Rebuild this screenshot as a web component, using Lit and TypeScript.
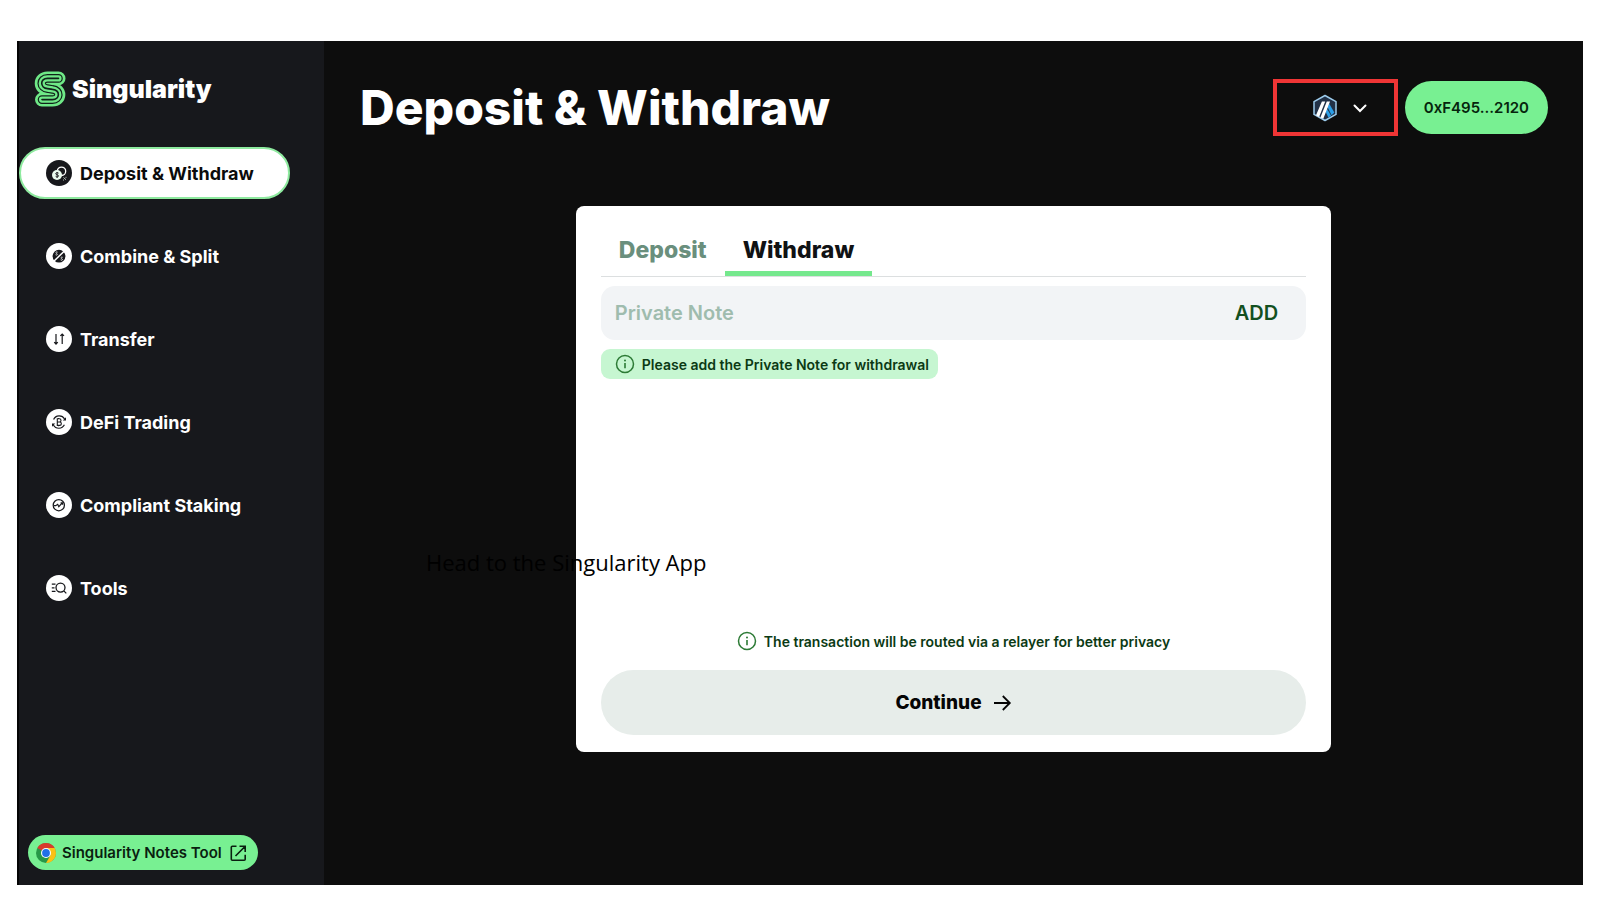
import { LitElement, html, css, svg } from "lit";
import { customElement, property, state } from "lit/decorators.js";
import { classMap } from "lit/directives/class-map.js";

const navIcons: Record<string, unknown> = {
  deposit: svg`
    <circle cx="13" cy="13" r="13" fill="#17181c"/>
    <circle cx="15.500" cy="11.300" r="4.200" fill="none" stroke="#fff" stroke-width="1.300"/>
    <circle cx="11" cy="15" r="5" fill="#e9fbee"/>
    <path d="M12.600 13.200c-.5-.7-2.900-.8-2.900.5 0 1.400 2.900.8 2.900 2.200 0 1.300-2.500 1.200-3 .4M11.100 12v6" fill="none" stroke="#17181c" stroke-width=".9"/>
    <path d="M17.500 17.500l2.500 2.200M20 16.800v1M17 20h1" fill="none" stroke="#cfd8d2" stroke-width=".9"/>`,
  combine: svg`
    <circle cx="13" cy="13" r="13" fill="#fff"/>
    <circle cx="13" cy="13.200" r="6.400" fill="#17181c"/>
    <path d="M6.800 19.200L19.200 7.200" stroke="#fff" stroke-width="1.500"/>
    <path d="M11.600 9.200c-.7-.6-2-.2-1.700.7.200.7 1.500.6 1.400 1.500-.1.800-1.300.9-1.800.3M16.700 14.400c-.7-.6-2-.2-1.700.7.200.7 1.500.6 1.400 1.500-.1.800-1.300.9-1.800.3" fill="none" stroke="#fff" stroke-width=".8"/>`,
  transfer: svg`
    <circle cx="13" cy="13" r="13" fill="#fff"/>
    <path d="M10 8v9.500M8.200 16.200l1.800 1.900 1.800-1.900M16.200 18V8.500M14.400 9.900L16.200 8l1.800 1.900" fill="none" stroke="#17181c" stroke-width="1.200"/>`,
  defi: svg`
    <circle cx="13" cy="13" r="13" fill="#fff"/>
    <path d="M7.600 10.500A6.200 6.200 0 0 1 18.600 10M18.400 15.800A6.200 6.200 0 0 1 7.400 16" fill="none" stroke="#17181c" stroke-width="1.200"/>
    <path d="M20 8.200v3.200h-3.200zM6 17.800v-3.200h3.200z" fill="#17181c"/>
    <path d="M11.300 9.800h2.200c2 0 2 3.200 0 3.200h-2.200zM11.300 13h2.400c2.200 0 2.200 3.400 0 3.400h-2.400zM12.600 8.900v.9M12.600 16.400v.9" fill="none" stroke="#17181c" stroke-width="1.100"/>`,
  staking: svg`
    <circle cx="13" cy="13" r="13" fill="#fff"/>
    <circle cx="12.800" cy="13.200" r="5.600" fill="none" stroke="#17181c" stroke-width="1.300"/>
    <path d="M8 13.700h1.700l2-1.400 1.100 2.400 3.500-3.900M14.600 10.800h1.900v1.900" fill="none" stroke="#17181c" stroke-width="1.200"/>`,
  tools: svg`
    <circle cx="13" cy="13" r="13" fill="#fff"/>
    <path d="M5.800 9.200h3.700M5.800 12.800h2.700M5.800 16.400h3.700M17.800 15.900l2.500 2.500" fill="none" stroke="#17181c" stroke-width="1.300"/>
    <circle cx="14.500" cy="12.600" r="4.500" fill="none" stroke="#17181c" stroke-width="1.300"/>`,
};

const logoCurve =
  "M24.500 7.400H13.500C5.600 7.400 6 17.200 13.500 17.600L18.500 18.400C26.600 19.200 26 28.600 18.500 28.600H8";

const infoIcon = html`<svg class="info" viewBox="0 0 20 20" aria-hidden="true">
  <circle cx="10" cy="10" r="8.500" fill="none" stroke="#2c7a35" stroke-width="1.500"/>
  <path d="M10 9v5.200" stroke="#2c7a35" stroke-width="1.600"/>
  <circle cx="10" cy="6.500" r="1" fill="#2c7a35"/>
</svg>`;

@customElement("side-bar")
class SideBar extends LitElement {
  @property() current = "deposit";

  private items = [
    { id: "deposit", label: "Deposit & Withdraw" },
    { id: "combine", label: "Combine & Split" },
    { id: "transfer", label: "Transfer" },
    { id: "defi", label: "DeFi Trading" },
    { id: "staking", label: "Compliant Staking" },
    { id: "tools", label: "Tools" },
  ];

  static styles = css`
    :host {
      display: flex;
      flex-direction: column;
      box-sizing: border-box;
      padding: 29px 0 15px;
      background: #17181c;
    }
    a {
      color: inherit;
      text-decoration: none;
    }
    .brand {
      display: flex;
      align-items: center;
      gap: 6px;
      padding-left: 15px;
      height: 38px;
      color: #fff;
      font-size: 25px;
      font-weight: 900;
    }
    .brand svg {
      width: 32px;
      height: 36px;
    }
    nav {
      display: flex;
      flex-direction: column;
      align-items: flex-start;
      gap: 31px;
      margin-top: 39px;
    }
    .item {
      display: flex;
      align-items: center;
      gap: 8px;
      box-sizing: border-box;
      width: 271px;
      height: 52px;
      padding-left: 25px;
      border: 2px solid transparent;
      border-radius: 26px;
      color: #fff;
      font-size: 18px;
      font-weight: 700;
    }
    .item svg {
      width: 26px;
      height: 26px;
    }
    .item.active {
      background: #fff;
      border-color: #8eea9f;
      color: #0b0b0b;
    }
    .notes {
      display: flex;
      align-items: center;
      align-self: flex-start;
      gap: 6px;
      height: 35px;
      margin: auto 0 0 9px;
      padding: 0 10px 0 8px;
      border-radius: 18px;
      background: #78f092;
      color: #0a1f10;
      font-size: 15px;
      font-weight: 600;
    }
    .notes svg {
      width: 20px;
      height: 20px;
    }
  `;

  render() {
    return html`
      <a class="brand" href="#home">
        <svg viewBox="0 0 32 36" fill="none" stroke-linecap="round" aria-hidden="true">
          <path d=${logoCurve} stroke="#6fe887" stroke-width="14"/>
          <path d=${logoCurve} stroke="#10221a" stroke-width="8.600"/>
          <path d=${logoCurve} stroke="#6fe887" stroke-width="6.200"/>
          <path d=${logoCurve} stroke="#10221a" stroke-width="1.600"/>
        </svg>
        <span>Singularity</span>
      </a>
      <nav>
        ${this.items.map(
          (i) => html`<a
            href="#${i.id}"
            class=${classMap({ item: true, active: i.id === this.current })}
            ><svg viewBox="0 0 26 26" aria-hidden="true">${navIcons[i.id]}</svg
            ><span>${i.label}</span></a
          >`
        )}
      </nav>
      <a class="notes" href="#notes-tool">
        <svg viewBox="0 0 20 20" aria-hidden="true">
          <circle cx="10" cy="10" r="10" fill="#279847"/>
          <path d="M10 10L1.340 5A10 10 0 0 1 18.660 5z" fill="#d93a2c"/>
          <path d="M10 5h8.660A10 10 0 0 1 10 20l4.330-7.500z" fill="#fbc116"/>
          <circle cx="10" cy="10" r="5" fill="#fff"/>
          <circle cx="10" cy="10" r="3.900" fill="#2170e8"/>
        </svg>
        <span>Singularity Notes Tool</span>
        <svg viewBox="0 0 20 20" fill="none" stroke="#0a1f10" stroke-width="1.600" aria-hidden="true">
          <path d="M8.500 3.300H4.300a1 1 0 0 0-1 1v11.900a1 1 0 0 0 1 1h11.900a1 1 0 0 0 1-1v-4.400M11.500 3.300h5.700V9M17 3.500L7.500 13"/>
        </svg>
      </a>
    `;
  }
}

@customElement("network-select")
class NetworkSelect extends LitElement {
  static styles = css`
    :host {
      display: grid;
      box-sizing: border-box;
      width: 125px;
      height: 57px;
      border: 4px solid #ef3535;
    }
    .face,
    select {
      grid-area: 1 / 1;
    }
    .face {
      display: flex;
      align-items: center;
      gap: 14px;
      padding-left: 35px;
    }
    .chain {
      width: 26px;
      height: 28px;
    }
    .chevron {
      width: 16px;
      height: 16px;
    }
    select {
      appearance: none;
      border: 0;
      background: transparent;
      cursor: pointer;
    }
  `;

  render() {
    return html`
      <span class="face">
        <svg class="chain" viewBox="0 0 26 28" aria-hidden="true">
          <path d="M13 1.500L24 7.600v12.800L13 26.500 2 20.400V7.600z" fill="#213147" stroke="#9dcced" stroke-width="1.500" stroke-linejoin="round"/>
          <path d="M15.600 13.200l1.500-3.700 5.200 9-2.700 2.800z" fill="#2b9fe8"/>
          <path d="M13.600 17.800l1.300-3.400 4.200 7.400-2.700 1.700z" fill="#2b9fe8"/>
          <path d="M9.900 7.500h3.300L7.100 23 4 21.300zM14.800 7.500H18l-6.700 17.300-2.900-1.400z" fill="#fff"/>
        </svg>
        <svg class="chevron" viewBox="0 0 16 16" fill="none" stroke="#fff" stroke-width="2" stroke-linecap="round" aria-hidden="true">
          <path d="M2.500 5.500L8 11l5.500-5.500"/>
        </svg>
      </span>
      <select aria-label="Network"><option value="arbitrum"></option></select>
    `;
  }
}

@customElement("transfer-card")
class TransferCard extends LitElement {
  @state() private tab = "withdraw";

  static styles = css`
    :host {
      display: flex;
      flex-direction: column;
      box-sizing: border-box;
      min-height: 546px;
      padding: 22px 25px 17px;
      border-radius: 8px;
      background: #fff;
    }
    button,
    input {
      font: inherit;
      border: 0;
      margin: 0;
      background: none;
    }
    .tabs {
      display: flex;
      border-bottom: 1px solid #dcdfe0;
    }
    .tab {
      height: 48px;
      padding: 0 18px;
      border-bottom: 5px solid transparent;
      color: #6a8f7d;
      font-size: 23px;
      font-weight: 800;
    }
    .tab.selected {
      border-color: #75e88d;
      color: #101214;
    }
    .field {
      display: flex;
      align-items: center;
      height: 54px;
      margin-top: 9px;
      padding: 0 28px 0 14px;
      border-radius: 14px;
      background: #f2f4f6;
      font-size: 20px;
      font-weight: 600;
    }
    .field input {
      flex: 1;
      min-width: 0;
      padding: 0;
      outline: none;
    }
    .field input::placeholder {
      color: #9fbcae;
      opacity: 1;
    }
    .field button {
      padding: 0;
      color: #13501f;
    }
    .hint,
    .route {
      display: flex;
      align-items: center;
      margin: 0;
      gap: 7px;
      color: #0b3a14;
      font-size: 14px;
      font-weight: 600;
    }
    .hint {
      align-self: flex-start;
      height: 30px;
      margin-top: 9px;
      padding: 0 9px 0 14px;
      border-radius: 9px;
      background: #c6f6d1;
    }
    .route {
      justify-content: center;
      height: 20px;
      margin-top: auto;
    }
    .info {
      width: 20px;
      height: 20px;
    }
    .continue {
      display: flex;
      align-items: center;
      justify-content: center;
      gap: 10px;
      height: 65px;
      margin-top: 19px;
      border-radius: 33px;
      background: #e7edea;
      color: #050505;
      font-size: 19px;
      font-weight: 800;
    }
    .continue svg {
      width: 20px;
      height: 20px;
    }
  `;

  private renderTab(id: string, label: string) {
    return html`<button
      role="tab"
      aria-selected=${this.tab === id ? "true" : "false"}
      class=${classMap({ tab: true, selected: this.tab === id })}
      @click=${() => (this.tab = id)}
    >${label}</button>`;
  }

  render() {
    return html`
      <div class="tabs" role="tablist">
        ${this.renderTab("deposit", "Deposit")}
        ${this.renderTab("withdraw", "Withdraw")}
      </div>
      <div class="field">
        <input type="text" aria-label="Private Note" placeholder="Private Note" />
        <button>ADD</button>
      </div>
      <p class="hint">${infoIcon}<span>Please add the Private Note for withdrawal</span></p>
      <p class="route">${infoIcon}<span>The transaction will be routed via a relayer for better privacy</span></p>
      <button class="continue">
        <span>Continue</span>
        <svg viewBox="0 0 20 20" fill="none" stroke="#050505" stroke-width="1.800" aria-hidden="true">
          <path d="M2 10h15.500M10.800 3l7 7-7 7"/>
        </svg>
      </button>
    `;
  }
}

@customElement("app-root")
class AppRoot extends LitElement {
  static styles = css`
    :host {
      display: flex;
      box-sizing: border-box;
      min-height: 100vh;
      padding: 41px 17px 15px;
      background: #fff;
      font-family: Inter, "Noto Sans", sans-serif;
    }
    .frame {
      position: relative;
      flex: 1;
      display: grid;
      grid-template-columns: 305px 1fr;
      border-left: 2px solid #050505;
      background: #0d0d0d;
    }
    main {
      display: flex;
      flex-direction: column;
      min-width: 0;
    }
    header {
      display: flex;
      align-items: center;
      gap: 7px;
      padding: 38px 35px 0 36px;
    }
    h1 {
      flex: 1;
      margin: 0;
      color: #fff;
      font-size: 48px;
      line-height: 57px;
      font-weight: 800;
    }
    .wallet {
      height: 53px;
      padding: 0 19px;
      border: 0;
      border-radius: 27px;
      background: #78f092;
      color: #06250d;
      font: inherit;
      font-size: 15px;
      font-weight: 600;
    }
    transfer-card {
      width: 60%;
      margin: 70px auto 0;
    }
    .caption {
      position: absolute;
      left: 407px;
      top: 505px;
      margin: 0;
      color: #000;
      font-family: "Open Sans", sans-serif;
      font-size: 22px;
      line-height: 32px;
      white-space: nowrap;
    }
  `;

  render() {
    return html`
      <div class="frame">
        <side-bar></side-bar>
        <main>
          <header>
            <h1>Deposit &amp; Withdraw</h1>
            <network-select></network-select>
            <button class="wallet">0xF495...2120</button>
          </header>
          <transfer-card></transfer-card>
        </main>
        <p class="caption">Head to the Singularity App</p>
      </div>
    `;
  }
}
